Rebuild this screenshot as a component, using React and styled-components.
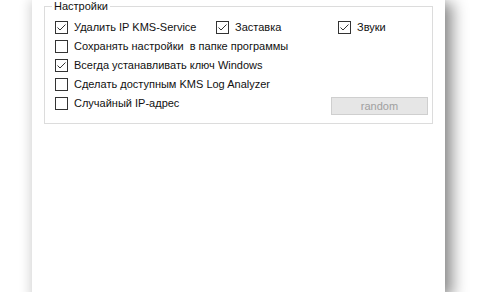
import styled, { createGlobalStyle } from "styled-components";

const GlobalStyle = createGlobalStyle`
  html, body {
    margin: 0;
    padding: 0;
    background: #fff;
    overflow: hidden;
  }
`;

export default function App() {
  const options = [
    [
      { label: "Удалить IP KMS-Service", checked: true, width: 161 },
      { label: "Заставка", checked: true, width: 122 },
      { label: "Звуки", checked: true },
    ],
    [{ label: "Сохранять настройки  в папке программы", checked: false }],
    [{ label: "Всегда устанавливать ключ Windows", checked: true }],
    [{ label: "Сделать доступным KMS Log Analyzer", checked: false }],
    [{ label: "Случайный IP-адрес", checked: false }],
  ];

  return (
    <Page>
      <GlobalStyle />
      <Window>
        <Group>
          <Legend>Настройки</Legend>
          {options.map((row, i) => (
            <Row key={i}>
              {row.map((item) => (
                <Option key={item.label} width={item.width}>
                  <Box>
                    {item.checked && (
                      <svg width="11" height="11" viewBox="0 0 11 11">
                        <polyline
                          points="1.5,5.5 4,8 9.5,2.5"
                          fill="none"
                          stroke="#333"
                          strokeWidth="1"
                        />
                      </svg>
                    )}
                  </Box>
                  <Label>{item.label}</Label>
                </Option>
              ))}
              {i === options.length - 1 && <Button disabled>random</Button>}
            </Row>
          ))}
        </Group>
      </Window>
    </Page>
  );
}

const Page = styled.div`
  height: 292px;
  display: flex;
  font-family: "Liberation Sans", Arial, sans-serif;
  font-size: 11px;
  color: #111;
`;

const Window = styled.div`
  margin-left: 32px;
  width: 413px;
  height: 300px;
  background: #fff;
  box-shadow: 11px 0 14px -3px rgba(0, 0, 0, 0.42),
    -3px 0 10px rgba(0, 0, 0, 0.14);
`;

const Group = styled.div`
  position: relative;
  box-sizing: border-box;
  margin: 6px 12px 0;
  height: 118px;
  border: 1px solid #dcdcdc;
  padding: 14px 4px 0 10px;
`;

const Legend = styled.span`
  position: absolute;
  top: -7px;
  left: 7px;
  padding: 0 2px;
  background: #fff;
  line-height: 13px;
`;

const Row = styled.div`
  display: flex;
  align-items: flex-start;
  justify-content: space-between;
  height: 19px;
`;

const Option = styled.label`
  display: flex;
  align-items: center;
  gap: 6px;
  height: 13px;
  flex: ${(p) => (p.width ? `0 0 ${p.width}px` : "0 0 auto")};
  &:last-of-type {
    margin-right: auto;
  }
`;

const Box = styled.span`
  box-sizing: border-box;
  width: 13px;
  height: 13px;
  border: 1px solid #333;
  background: #fff;
  display: flex;
  align-items: center;
  justify-content: center;
`;

const Label = styled.span`
  white-space: pre;
  line-height: 13px;
`;

const Button = styled.button`
  box-sizing: border-box;
  width: 97px;
  height: 18px;
  padding: 0;
  border: 1px solid #cfcfcf;
  background: #e6e6e6;
  color: #a0a0a0;
  font-family: inherit;
  font-size: 11px;
  line-height: 16px;
`;
